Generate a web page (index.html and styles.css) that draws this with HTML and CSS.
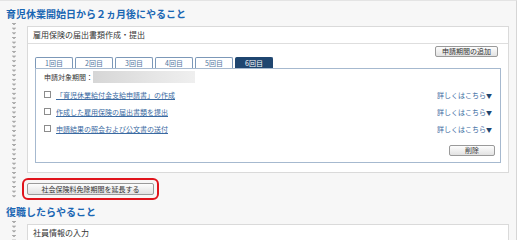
FILE: index.html
```html
<!DOCTYPE html>
<html lang="ja">
<head>
<meta charset="utf-8">
<link rel="stylesheet" href="styles.css">
</head>
<body>
<div class="page">
  <section class="sec">
    <h2 class="sec-title">育児休業開始日から２ヵ月後にやること</h2>
    <div class="sec-body">
      <div class="rail"></div>
      <div class="sec-content">
        <div class="card">
          <div class="card-head">雇用保険の届出書類作成・提出</div>
          <div class="card-body">
            <div class="tools"><button class="btn btn-add">申請期間の追加</button></div>
            <ul class="tabs">
              <li class="tab">1回目</li>
              <li class="tab">2回目</li>
              <li class="tab">3回目</li>
              <li class="tab">4回目</li>
              <li class="tab">5回目</li>
              <li class="tab tab-active">6回目</li>
            </ul>
            <div class="panel">
              <div class="period"><span class="period-label">申請対象期間：</span><span class="redacted"></span></div>
              <ul class="tasks">
                <li class="task"><span class="check"></span><a class="task-link" href="#">「育児休業給付金支給申請書」の作成</a><span class="more">詳しくはこちら<span class="more-arrow">▼</span></span></li>
                <li class="task"><span class="check"></span><a class="task-link" href="#">作成した雇用保険の届出書類を提出</a><span class="more">詳しくはこちら<span class="more-arrow">▼</span></span></li>
                <li class="task"><span class="check"></span><a class="task-link" href="#">申請結果の照会および公文書の送付</a><span class="more">詳しくはこちら<span class="more-arrow">▼</span></span></li>
              </ul>
              <div class="panel-foot"><button class="btn btn-del">削除</button></div>
            </div>
          </div>
        </div>
        <div class="highlight"><button class="btn btn-wide">社会保険料免除期間を延長する</button></div>
      </div>
    </div>
  </section>
  <section class="sec">
    <h2 class="sec-title">復職したらやること</h2>
    <div class="sec-body sec-body-2">
      <div class="rail"></div>
      <div class="sec-content">
        <div class="card">
          <div class="card-head">社員情報の入力</div>
          <div class="card-body card-body-empty"></div>
        </div>
      </div>
    </div>
  </section>
</div>
</body>
</html>
```
FILE: styles.css
```css
* { box-sizing: border-box; }
html, body { margin: 0; padding: 0; background: #ffffff; }
body {
  font-family: "Noto Sans CJK JP", "Liberation Sans", sans-serif;
  color: #333333;
  width: 519px;
  height: 240px;
  overflow: hidden;
}
.page {
  width: 517px;
  height: 240px;
  background: #f7f7f7;
  border-right: 1px solid #d6d6d6;
  border-top: 1px solid #e4e4e4;
  padding-top: 5px;
  overflow: hidden;
}
.sec-title {
  margin: 0;
  padding-left: 6px;
  font-size: 10px;
  line-height: 16px;
  font-weight: bold;
  color: #1a66b3;
}
.sec-body {
  display: flex;
  padding-bottom: 4px;
}
.rail {
  width: 27px;
  flex: 0 0 27px;
  background-image: conic-gradient(from -34deg at 50% 3px, #aaaaaa 68deg, transparent 0);
  background-size: 4px 4.66px;
  background-position: 12px 1px;
  background-repeat: repeat-y;
}
.sec-content {
  width: 482px;
  padding-top: 4px;
}
.card {
  background: #ffffff;
  border: 1px solid #dadada;
}
.card-head {
  height: 17px;
  line-height: 16px;
  font-size: 8px;
  padding-left: 5px;
  color: #333;
  border-bottom: 1px solid #dedede;
}
.card-body {
  padding: 2px 7px 9px 7px;
}
.card-body-empty { height: 40px; }
.tools {
  display: flex;
  justify-content: flex-end;
  padding-right: 3px;
}
.btn {
  font-family: "Noto Sans CJK JP", "Liberation Sans", sans-serif;
  font-size: 7px;
  line-height: 9px;
  height: 11px;
  padding: 0 6px;
  margin: 0;
  color: #333;
  background: linear-gradient(#fdfdfd, #e2e2e2);
  border: 1px solid #9a9a9a;
  border-radius: 2px;
  display: block;
}
.btn-add { width: 63px; }
.btn-del { width: 46px; }
.btn-wide { width: 127px; height: 12px; line-height: 10px; }
.tabs {
  list-style: none;
  margin: 0;
  padding: 0;
  display: flex;
  gap: 2px;
  height: 11px;
}
.tab {
  width: 38px;
  height: 11px;
  border: 1px solid #7c98b8;
  border-bottom: none;
  border-radius: 2px 2px 0 0;
  background: #ffffff;
  color: #4f74a0;
  font-size: 7px;
  line-height: 10px;
  text-align: center;
}
.tab-active {
  background: #1f4670;
  border-color: #1f4670;
  color: #ffffff;
}
.panel {
  border: 1px solid #a6b9cf;
  padding: 2px 5px 6px 8px;
}
.period {
  display: flex;
  align-items: center;
  height: 12px;
  font-size: 7px;
  color: #333;
}
.redacted {
  display: block;
  width: 102px;
  height: 12px;
  background: linear-gradient(90deg, #d6d6d6, #e6e6e6 60%, #efefef);
}
.tasks {
  list-style: none;
  margin: 0;
  padding: 3px 0 0 0;
}
.task {
  display: flex;
  align-items: center;
  height: 17px;
  font-size: 7px;
}
.check {
  width: 7px;
  height: 7px;
  border: 1px solid #8c8c8c;
  background: #fff;
  margin-right: 5px;
  flex: 0 0 7px;
}
.task-link {
  color: #3a6aa2;
  text-decoration: underline;
}
.more {
  margin-left: auto;
  margin-right: 3px;
  color: #3a6aa2;
}
.more-arrow {
  color: #1f4670;
  font-size: 6px;
}
.panel-foot {
  display: flex;
  justify-content: flex-end;
  padding-top: 8px;
}
.highlight {
  display: inline-block;
  margin: 3px 0 0 -5px;
  padding: 3px;
  border: 2px solid #e0141c;
  border-radius: 6px;
}
```
